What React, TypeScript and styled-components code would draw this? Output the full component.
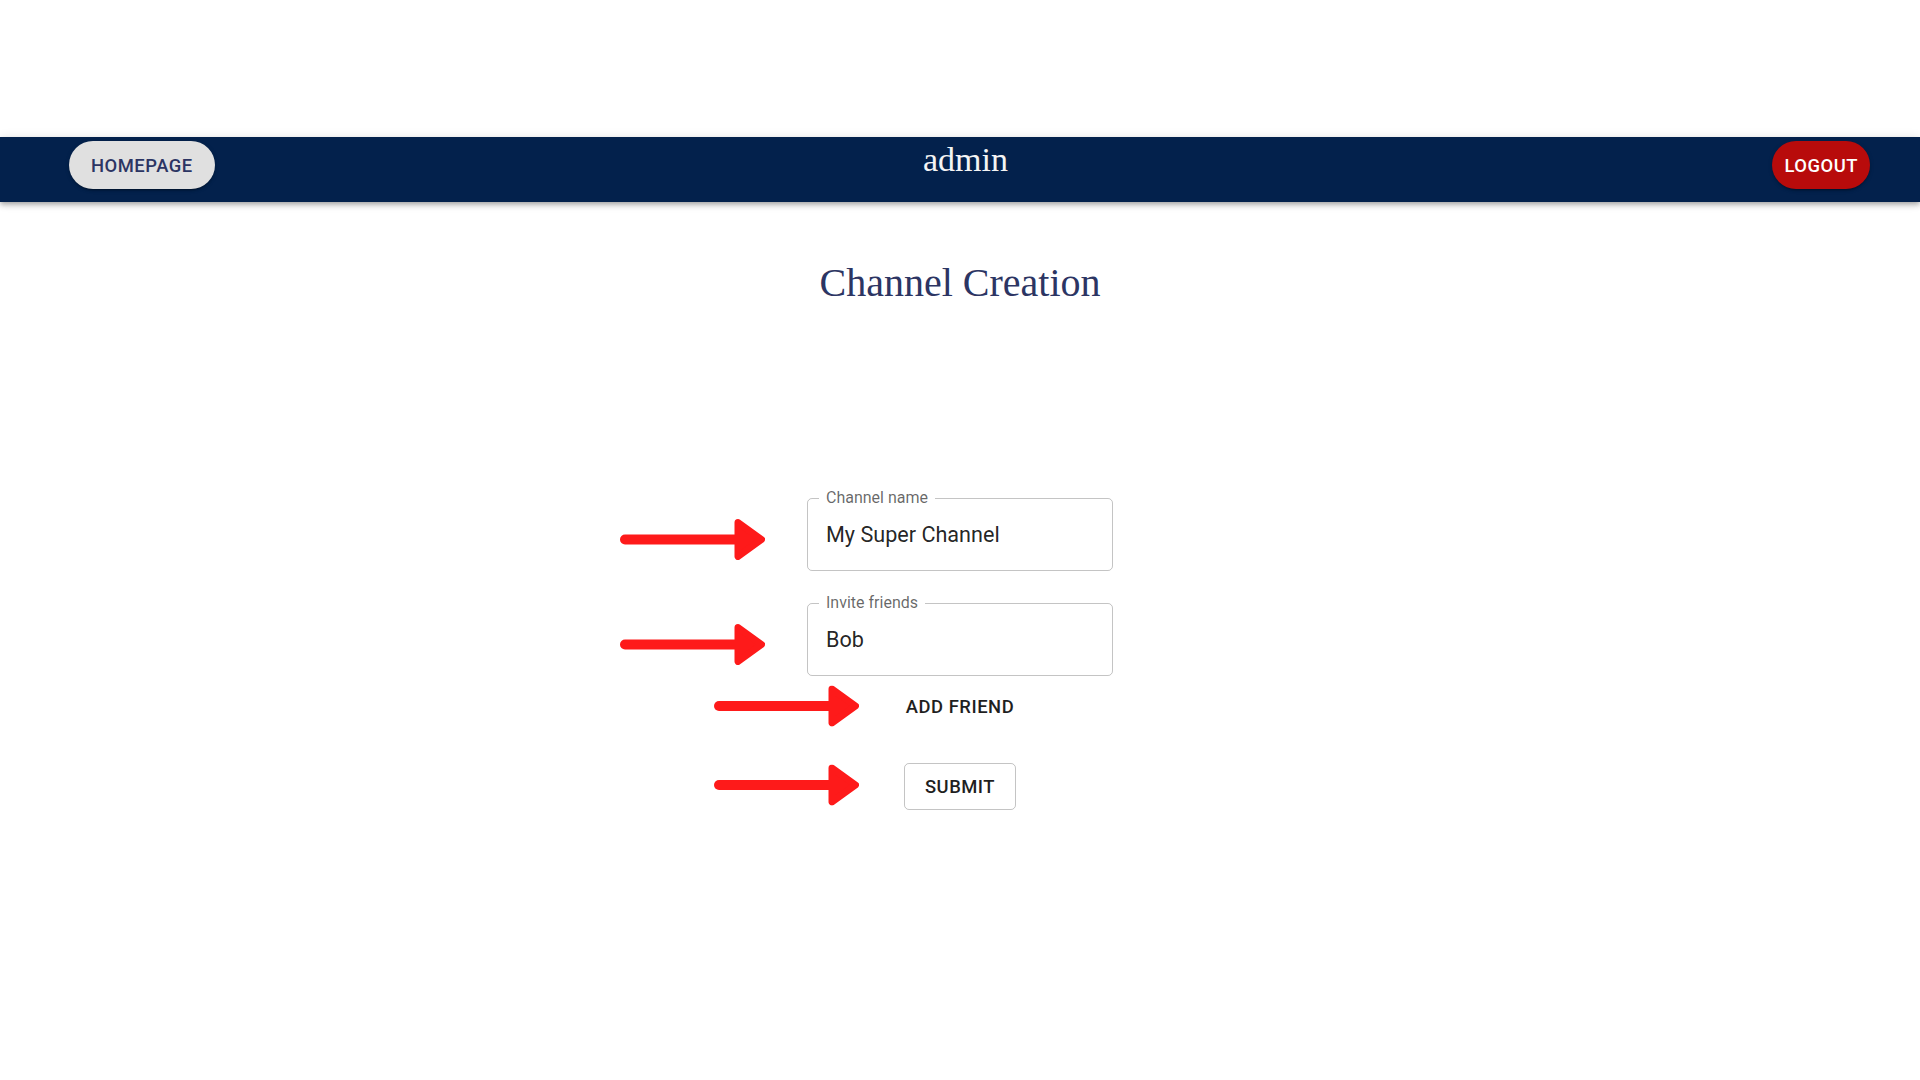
import React from "react";
import styled, { createGlobalStyle } from "styled-components";

const GlobalStyle = createGlobalStyle`
  html, body { margin: 0; padding: 0; background: #ffffff; }
  body { font-family: Roboto, "Liberation Sans", Arial, sans-serif; }
  * { box-sizing: border-box; }
`;

const Page = styled.div`
  width: 1920px;
  min-height: 1080px;
  padding-top: 137px;
  background: #ffffff;
`;

const Header = styled.header`
  height: 65px;
  background: #03214c;
  display: grid;
  grid-template-columns: 1fr auto 1fr;
  align-items: start;
  padding: 4px 50px 0 69px;
  box-shadow: 0 2px 4px -1px rgba(0, 0, 0, 0.2), 0 4px 5px 0 rgba(0, 0, 0, 0.14),
    0 1px 10px 0 rgba(0, 0, 0, 0.12);
  position: relative;
  z-index: 1;
`;

const HeaderTitle = styled.h2`
  margin: 0 8px 0 0;
  font-family: "Liberation Serif", "Times New Roman", serif;
  font-weight: 400;
  font-size: 34px;
  line-height: normal;
  color: #f4f4f4;
`;

const PillButton = styled.button<{ $variant: "light" | "danger"; $align: "start" | "end" }>`
  justify-self: ${(p) => p.$align};
  height: 48px;
  padding: ${(p) => (p.$variant === "light" ? "0 22px" : "0 12px")};
  border: none;
  border-radius: 24px;
  font-family: Roboto, "Liberation Sans", Arial, sans-serif;
  font-weight: 500;
  font-size: 18.4px;
  letter-spacing: 0.52px;
  text-transform: uppercase;
  cursor: pointer;
  background: ${(p) => (p.$variant === "light" ? "#e0e0e0" : "#b80b0b")};
  color: ${(p) => (p.$variant === "light" ? "#2c3563" : "#ffffff")};
  box-shadow: 0 3px 1px -2px rgba(0, 0, 0, 0.2), 0 2px 2px 0 rgba(0, 0, 0, 0.14),
    0 1px 5px 0 rgba(0, 0, 0, 0.12);
`;

const Main = styled.main`
  display: flex;
  flex-direction: column;
  align-items: center;
`;

const Title = styled.h1`
  margin: 59px 0 0;
  font-family: "Liberation Serif", "Times New Roman", serif;
  font-weight: 400;
  font-size: 40px;
  line-height: 44px;
  color: #2c3563;
`;

const Form = styled.form`
  display: flex;
  flex-direction: column;
  align-items: center;
  margin-top: 193px;
`;

const Row = styled.div<{ $mt: number }>`
  position: relative;
  margin-top: ${(p) => p.$mt}px;
`;

const ArrowSlot = styled.div<{ $gap: number; $dy: number }>`
  position: absolute;
  top: 50%;
  right: calc(100% + ${(p) => p.$gap}px);
  width: 145px;
  height: 41px;
  transform: translateY(calc(-50% + ${(p) => p.$dy}px));
  display: flex;
`;

const Field = styled.div`
  position: relative;
  width: 306px;
`;

const FieldLabel = styled.label`
  position: absolute;
  top: -9px;
  left: 12px;
  padding: 0 7px;
  background: #ffffff;
  font-size: 16px;
  line-height: 18px;
  color: rgba(0, 0, 0, 0.6);
`;

const FieldInput = styled.input`
  display: block;
  width: 100%;
  height: 73px;
  padding: 20.5px 18px;
  border: 1px solid rgba(0, 0, 0, 0.23);
  border-radius: 5px;
  font-family: Roboto, "Liberation Sans", Arial, sans-serif;
  font-size: 21.6px;
  line-height: 30px;
  color: rgba(0, 0, 0, 0.87);
  background: transparent;
  outline: none;
`;

const ActionButton = styled.button<{ $outlined?: boolean }>`
  height: ${(p) => (p.$outlined ? "47px" : "47.5px")};
  padding: ${(p) => (p.$outlined ? "0 20px" : "0 10.4px")};
  border: ${(p) => (p.$outlined ? "1px solid rgba(0,0,0,0.23)" : "none")};
  border-radius: 5px;
  background: transparent;
  font-family: Roboto, "Liberation Sans", Arial, sans-serif;
  font-weight: 500;
  font-size: 18.4px;
  letter-spacing: 0.52px;
  text-transform: uppercase;
  color: #1f1f1f;
  cursor: pointer;
`;

const Arrow: React.FC = () => (
  <svg width="145" height="41" viewBox="0 0 145 41">
    <line x1="5" y1="20.5" x2="120" y2="20.5" stroke="#fe1a1a" strokeWidth="10" strokeLinecap="round" />
    <polygon
      points="118,3.5 141.5,20.5 118,37.5"
      fill="#fe1a1a"
      stroke="#fe1a1a"
      strokeWidth="7"
      strokeLinejoin="round"
    />
  </svg>
);

export default function App() {
  return (
    <>
      <GlobalStyle />
      <Page>
        <Header>
          <PillButton $variant="light" $align="start">Homepage</PillButton>
          <HeaderTitle>admin</HeaderTitle>
          <PillButton $variant="danger" $align="end">Logout</PillButton>
        </Header>
        <Main>
          <Title>Channel Creation</Title>
          <Form onSubmit={(e) => e.preventDefault()}>
            <Row $mt={0}>
              <ArrowSlot $gap={42} $dy={4.5}>
                <Arrow />
              </ArrowSlot>
              <Field>
                <FieldLabel>Channel name</FieldLabel>
                <FieldInput readOnly value="My Super Channel" />
              </Field>
            </Row>
            <Row $mt={32}>
              <ArrowSlot $gap={42} $dy={4.5}>
                <Arrow />
              </ArrowSlot>
              <Field>
                <FieldLabel>Invite friends</FieldLabel>
                <FieldInput readOnly value="Bob" />
              </Field>
            </Row>
            <Row $mt={7}>
              <ArrowSlot $gap={36} $dy={-1}>
                <Arrow />
              </ArrowSlot>
              <ActionButton type="button">Add friend</ActionButton>
            </Row>
            <Row $mt={32}>
              <ArrowSlot $gap={45} $dy={-1}>
                <Arrow />
              </ArrowSlot>
              <ActionButton type="submit" $outlined>Submit</ActionButton>
            </Row>
          </Form>
        </Main>
      </Page>
    </>
  );
}
